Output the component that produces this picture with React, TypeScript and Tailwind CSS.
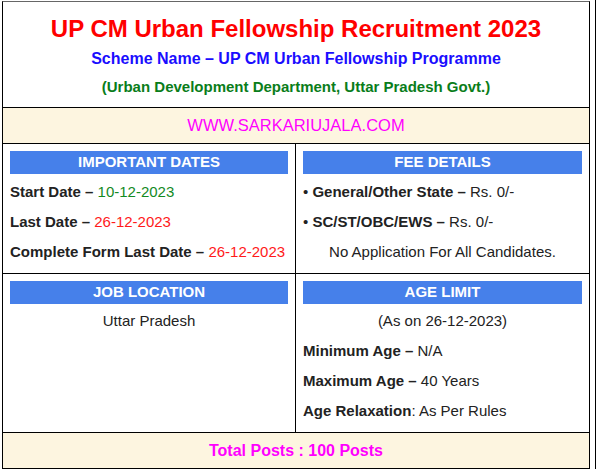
export default function App() {
  return (
    <div className="w-[607px] h-[469px] bg-white font-['Liberation_Sans',Arial,sans-serif] text-[15px] text-[#222]">
      <div className="w-[596px] h-[469px] border-r border-black pt-[1px]">
        <div className="ml-[2px] w-[588px] border-t border-t-[#666] border-l border-r border-b border-black">
          {/* title */}
          <div className="h-[106px] border-b border-black flex flex-col items-center pt-[12px]">
            <h1 className="text-[24px] leading-[30px] font-bold text-[#ff0000]">UP CM Urban Fellowship Recruitment 2023</h1>
            <p className="mt-[1px] text-[16px] leading-[28px] font-bold text-[#1a0dff]">Scheme Name – UP CM Urban Fellowship Programme</p>
            <p className="text-[15px] leading-[28px] font-bold text-[#0a7d1a]">(Urban Development Department, Uttar Pradesh Govt.)</p>
          </div>
          <div className="h-[36px] border-b border-black bg-[#fdf5e0] flex items-center justify-center text-[16.5px] text-[#ff00ff]">
            WWW.SARKARIUJALA.COM
          </div>

          <div className="grid grid-cols-[293px_1fr] border-b border-black">
            <div className="border-r border-black px-[7px] pt-[7px] pb-[6px]">
              <Head>IMPORTANT DATES</Head>
              <div className="mt-[3px]">
                <Line><b>Start Date –</b> <span className="text-[#138a1f]">10-12-2023</span></Line>
                <Line><b>Last Date –</b> <span className="text-[#ff1a1a]">26-12-2023</span></Line>
                <Line><b>Complete Form Last Date –</b> <span className="text-[#ff1a1a]">26-12-2023</span></Line>
              </div>
            </div>
            <div className="px-[7px] pt-[7px] pb-[6px]">
              <Head>FEE DETAILS</Head>
              <div className="mt-[3px]">
                <Line>• <b>General/Other State –</b> Rs. 0/-</Line>
                <Line>• <b>SC/ST/OBC/EWS –</b> Rs. 0/-</Line>
                <Line center>No Application For All Candidates.</Line>
              </div>
            </div>
          </div>

          <div className="grid grid-cols-[293px_1fr] border-b border-black">
            <div className="border-r border-black px-[7px] pt-[7px] pb-[6px]">
              <Head>JOB LOCATION</Head>
              <div className="mt-[2px]">
                <Line center>Uttar Pradesh</Line>
              </div>
            </div>
            <div className="px-[7px] pt-[7px] pb-[6px]">
              <Head>AGE LIMIT</Head>
              <div className="mt-[2px]">
                <Line center>(As on 26-12-2023)</Line>
                <Line><b>Minimum Age –</b> N/A</Line>
                <Line><b>Maximum Age –</b> 40 Years</Line>
                <Line><b>Age Relaxation</b>: As Per Rules</Line>
              </div>
            </div>
          </div>

          <div className="h-[35px] bg-[#fdf5e0] flex items-center justify-center text-[16px] font-bold text-[#ff00ff]">
            Total Posts : 100 Posts
          </div>
        </div>
      </div>
    </div>
  )
}

function Head({ children }: { children: React.ReactNode }) {
  return (
    <div className="h-[23px] bg-[#4680ea] text-white font-bold text-[15px] flex items-center justify-center">
      {children}
    </div>
  )
}

function Line({ children, center }: { children: React.ReactNode; center?: boolean }) {
  return (
    <div className={center ? 'h-[30px] leading-[30px] text-center' : 'h-[30px] leading-[30px]'}>
      {children}
    </div>
  )
}
